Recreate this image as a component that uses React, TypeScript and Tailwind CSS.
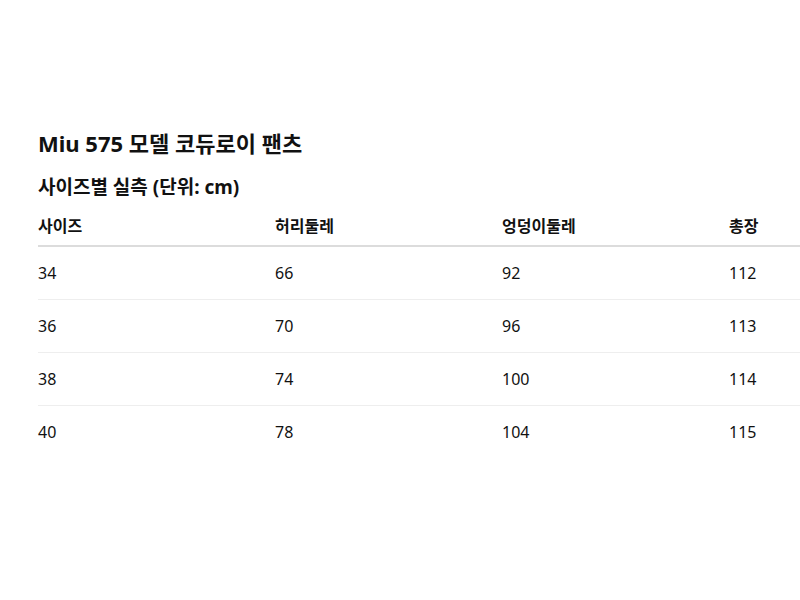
const rows = [
  ["34", "66", "92", "112"],
  ["36", "70", "96", "113"],
  ["38", "74", "100", "114"],
  ["40", "78", "104", "115"],
];

const headers = ["사이즈", "허리둘레", "엉덩이둘레", "총장"];
const widths = ["w-[237px]", "w-[227px]", "w-[227px]", "w-[237px]"];

export default function App() {
  return (
    <div
      className="w-[800px] h-[600px] overflow-hidden bg-white text-[#111]"
      style={{ fontFamily: '"Noto Sans", "Noto Sans CJK KR", sans-serif' }}
    >
      <div className="pl-[38px] pt-[128px]">
        <h1 className="text-[22px] font-bold leading-[30px]">Miu 575 모델 코듀로이 팬츠</h1>
        <h2 className="mt-[16px] text-[19px] font-bold leading-[26px]">사이즈별 실측 (단위: cm)</h2>
        <table className="mt-[6px] border-collapse w-[928px] table-fixed">
          <thead>
            <tr className="border-b-2 border-[#dcdcdc]">
              {headers.map((h, i) => (
                <th key={h} className={`${widths[i]} text-left font-semibold text-[16px] h-[40px] align-middle p-0`}>
                  {h}
                </th>
              ))}
            </tr>
          </thead>
          <tbody>
            {rows.map((r, ri) => (
              <tr key={ri} className={ri < rows.length - 1 ? "border-b border-[#eeeeee]" : ""}>
                {r.map((c, ci) => (
                  <td key={ci} className="p-0 h-[53px] align-middle text-[16px] font-normal">
                    {c}
                  </td>
                ))}
              </tr>
            ))}
          </tbody>
        </table>
      </div>
    </div>
  );
}
